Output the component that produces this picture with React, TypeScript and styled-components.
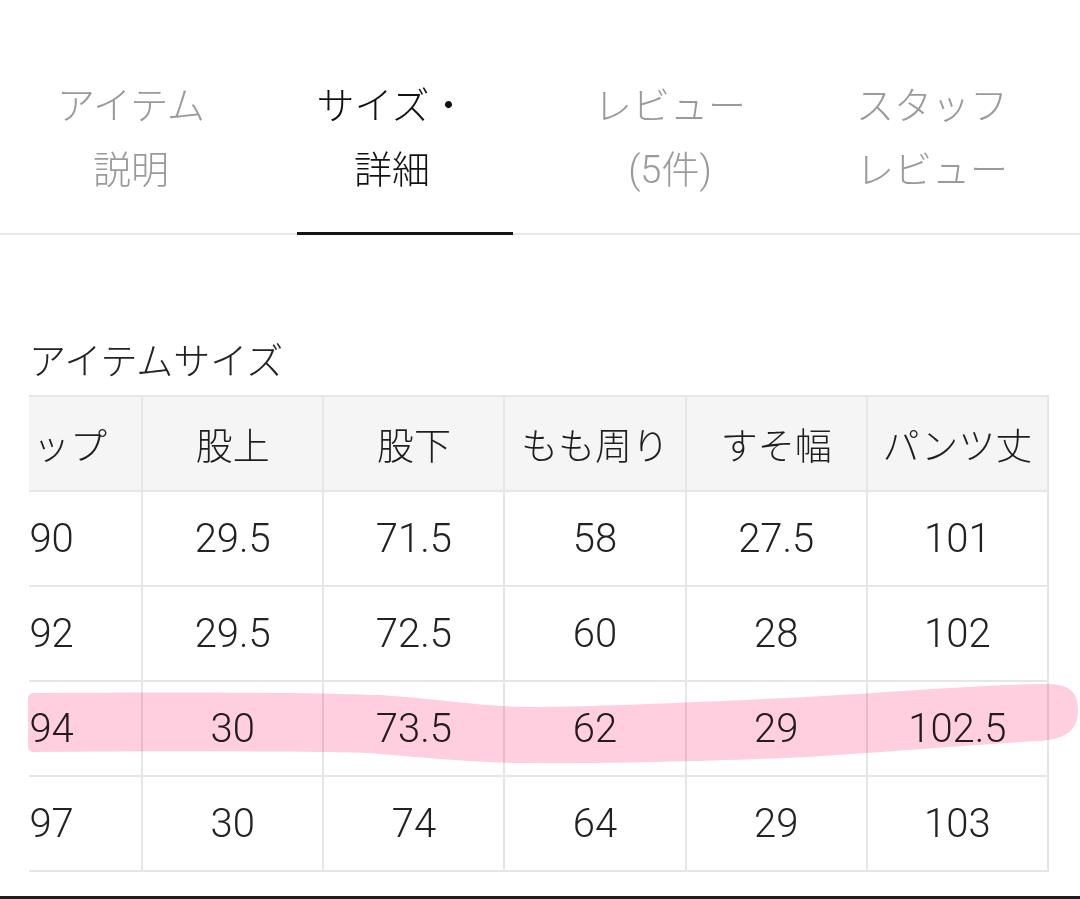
import React, { useLayoutEffect, useRef } from "react";
import styled, { createGlobalStyle } from "styled-components";

const GlobalStyle = createGlobalStyle`
  html, body {
    margin: 0;
    padding: 0;
    background: #ffffff;
  }
  body {
    font-family: Roboto, "Noto Sans CJK JP", sans-serif;
    -webkit-font-smoothing: antialiased;
  }
`;

const FONT = `Roboto, "Noto Sans CJK JP", sans-serif`;

const Page = styled.div`
  position: relative;
  display: flex;
  flex-direction: column;
  height: 899px;
  overflow: hidden;
  background: #ffffff;
`;

const TabBar = styled.nav`
  display: grid;
  grid-template-columns: 262px 260px 296px 228px;
  padding-top: 74px;
  border-bottom: 2px solid #e8e8e8;
`;

const Tab = styled.button<{ $active?: boolean }>`
  position: relative;
  display: flex;
  flex-direction: column;
  align-items: center;
  margin: 0;
  padding: 0 0 31px;
  border: 0;
  background: none;
  font-family: ${FONT};
  font-size: 38px;
  font-weight: 300;
  line-height: 64px;
  color: ${(p) => (p.$active ? "#111111" : "#9a9a9a")};
  cursor: pointer;

  &::after {
    content: "";
    display: ${(p) => (p.$active ? "block" : "none")};
    position: absolute;
    left: 35px;
    right: 9px;
    bottom: -2px;
    height: 3px;
    background: #151515;
  }
`;

const TabLine = styled.span`
  display: block;
  white-space: nowrap;
`;

const Content = styled.section`
  padding: 0 31px 0 29px;
`;

const Heading = styled.h3`
  margin: 103px 0 7px;
  font-family: ${FONT};
  font-size: 37px;
  font-weight: 300;
  line-height: 50px;
  color: #222222;
`;

const TableScroller = styled.div`
  overflow-x: auto;
  scrollbar-width: none;
  &::-webkit-scrollbar {
    display: none;
  }
`;

const SizeTable = styled.table`
  width: 1087px;
  table-layout: fixed;
  border-collapse: collapse;
`;

const HeadCell = styled.th`
  height: 93px;
  padding: 0;
  border: 2px solid #e6e6e6;
  background: #f5f5f5;
  font-family: ${FONT};
  font-size: 37px;
  font-weight: 300;
  color: #1e1e1e;
  text-align: center;
  white-space: nowrap;
`;

const Cell = styled.td`
  height: 93px;
  padding: 0;
  border: 2px solid #e6e6e6;
  font-family: ${FONT};
  font-size: 40px;
  font-weight: 300;
  color: #222222;
  text-align: center;
  white-space: nowrap;
`;

const Highlight = styled.svg`
  position: absolute;
  top: 0;
  left: 0;
  width: 1080px;
  height: 899px;
  pointer-events: none;
  mix-blend-mode: multiply;
`;

const BottomEdge = styled.div`
  margin-top: auto;
  height: 3px;
  background: #1d1d1d;
`;

const tabs = [
  { lines: ["アイテム", "説明"], active: false },
  { lines: ["サイズ・", "詳細"], active: true },
  { lines: ["レビュー", "(5件)"], active: false },
  { lines: ["スタッフ", "レビュー"], active: false },
];

const headers = ["ヒップ", "股上", "股下", "もも周り", "すそ幅", "パンツ丈"];

const rows = [
  ["90", "29.5", "71.5", "58", "27.5", "101"],
  ["92", "29.5", "72.5", "60", "28", "102"],
  ["94", "30", "73.5", "62", "29", "102.5"],
  ["97", "30", "74", "64", "29", "103"],
];

export default function App() {
  const scrollRef = useRef<HTMLDivElement>(null);

  useLayoutEffect(() => {
    const el = scrollRef.current;
    if (el) el.scrollLeft = el.scrollWidth;
  }, []);

  return (
    <>
      <GlobalStyle />
      <Page>
        <TabBar>
          {tabs.map((t) => (
            <Tab key={t.lines.join("")} $active={t.active}>
              {t.lines.map((l) => (
                <TabLine key={l}>{l}</TabLine>
              ))}
            </Tab>
          ))}
        </TabBar>
        <Content>
          <Heading>アイテムサイズ</Heading>
          <TableScroller ref={scrollRef}>
            <SizeTable>
              <colgroup>
                {headers.map((h) => (
                  <col key={h} style={{ width: `${1087 / headers.length}px` }} />
                ))}
              </colgroup>
              <thead>
                <tr>
                  {headers.map((h) => (
                    <HeadCell key={h}>{h}</HeadCell>
                  ))}
                </tr>
              </thead>
              <tbody>
                {rows.map((r, i) => (
                  <tr key={i}>
                    {r.map((v, j) => (
                      <Cell key={j}>{v}</Cell>
                    ))}
                  </tr>
                ))}
              </tbody>
            </SizeTable>
          </TableScroller>
        </Content>
        <BottomEdge />
        <Highlight viewBox="0 0 1080 899" aria-hidden="true">
          <path
            fill="#ffcfdf"
            d="M 34 693 C 150 692, 300 692, 380 695 C 440 699, 480 706, 523 707 C 600 707, 720 701, 807 697 C 880 693, 960 686, 1040 684 C 1068 683, 1078 690, 1078 710 C 1078 730, 1066 739, 1040 741 C 980 744, 900 751, 807 757 C 720 761, 600 764, 523 763 C 460 762, 410 756, 367 753 C 300 751, 150 751, 34 752 Q 28 752, 28 746 L 28 699 Q 28 693, 34 693 Z"
          />
        </Highlight>
      </Page>
    </>
  );
}
